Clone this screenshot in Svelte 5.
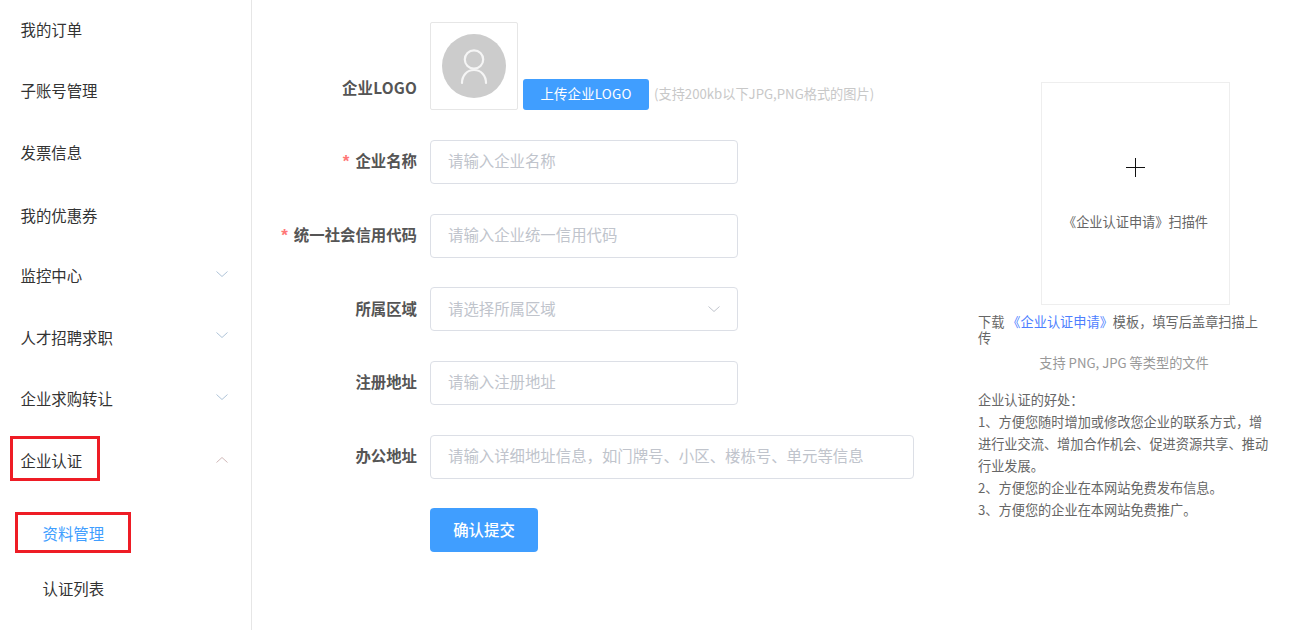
<script>
  const menu = [
    { label: '我的订单', h: 61, nudge: true },
    { label: '子账号管理', h: 62 },
    { label: '发票信息', h: 62 },
    { label: '我的优惠券', h: 62, nudge: true },
    { label: '监控中心', arrow: 'down', h: 61 },
    { label: '人才招聘求职', arrow: 'down', h: 62 },
    { label: '企业求购转让', arrow: 'down', h: 61 },
    { label: '企业认证', arrow: 'up', box: true, h: 62 }
  ];
  const fields = [
    { label: '企业名称', req: true, ph: '请输入企业名称' },
    { label: '统一社会信用代码', req: true, ph: '请输入企业统一信用代码' },
    { label: '所属区域', ph: '请选择所属区域', select: true },
    { label: '注册地址', ph: '请输入注册地址' },
    { label: '办公地址', ph: '请输入详细地址信息，如门牌号、小区、楼栋号、单元等信息', wide: true }
  ];
</script>

<div class="page">
  <aside class="side">
    {#each menu as m}
      <div class="item" class:nudge={m.nudge} style="height:{m.h}px">
        <span class="label">{m.label}</span>
        {#if m.box}<span class="redbox main"></span>{/if}
        {#if m.arrow}
          <svg class="arrow" class:up={m.arrow === 'up'} width="12" height="6" viewBox="0 0 12 6"><path d="M.5.5l5.500 5 5.500-5" fill="none" stroke="currentColor" stroke-width="1"/></svg>
        {/if}
      </div>
    {/each}
    <div class="sub active"><span>资料管理</span><span class="redbox second"></span></div>
    <div class="sub last"><span>认证列表</span></div>
  </aside>

  <main class="form">
    <div class="logo-row">
      <div class="label-col logo-label">企业LOGO</div>
      <div class="logo-box">
        <svg width="64" height="64" viewBox="0 0 64 64">
          <circle cx="32" cy="32" r="32" fill="#ccc"/>
          <circle cx="32" cy="25.500" r="9.200" fill="none" stroke="#f5f5f5" stroke-width="2.200"/>
          <path d="M20 49c0-7.500 5-13 12-13s12 5.500 12 13" fill="none" stroke="#f5f5f5" stroke-width="2.200" stroke-linecap="round"/>
        </svg>
      </div>
      <button class="upload">上传企业LOGO</button>
      <span class="hint">(支持200kb以下JPG,PNG格式的图片)</span>
    </div>

    {#each fields as f}
      <div class="row">
        <div class="label-col">{#if f.req}<i>*</i>{/if}{f.label}</div>
        <div class="input" class:wide={f.wide}>
          <span>{f.ph}</span>
          {#if f.select}
            <svg width="12" height="6" viewBox="0 0 12 6"><path d="M.5.5l5.500 5 5.500-5" fill="none" stroke="#c0c4cc" stroke-width="1"/></svg>
          {/if}
        </div>
      </div>
    {/each}

    <button class="submit">确认提交</button>
  </main>

  <section class="right">
    <div class="scan">
      <svg width="19" height="19" viewBox="0 0 19 19"><path d="M9.500 0v19M0 9.500h19" stroke="#111" stroke-width="1"/></svg>
      <p>《企业认证申请》扫描件</p>
    </div>
    <p class="dl">下载 <a href="#top">《企业认证申请》</a>模板，填写后盖章扫描上传</p>
    <p class="types">支持 PNG, JPG 等类型的文件</p>
    <div class="benefits">
      <p>企业认证的好处：</p>
      <p>1、方便您随时增加或修改您企业的联系方式，增进行业交流、增加合作机会、促进资源共享、推动行业发展。</p>
      <p>2、方便您的企业在本网站免费发布信息。</p>
      <p>3、方便您的企业在本网站免费推广。</p>
    </div>
  </section>
</div>

<style>
  :global(body) { margin: 0; background: #fff; }
  .page {
    display: flex;
    width: 1298px;
    height: 630px;
    overflow: hidden;
    font-family: "Noto Sans CJK SC", "Liberation Sans", sans-serif;
    color: #333;
  }
  .side {
    width: 251px;
    height: 630px;
    flex: none;
    border-right: 1px solid #e6e6e6;
  }
  .item {
    position: relative;
    box-sizing: border-box;
    display: flex;
    align-items: center;
    justify-content: space-between;
    padding: 0 23px 0 20.500px;
    font-size: 15.400px;
  }
  .item.nudge { padding-top: 2px; }
  .label { margin-top: -5px; }
  .arrow { color: #afc4d8; margin-top: -8px; }
  .arrow.up { transform: rotate(180deg); color: #d0b8b8; margin-top: -5px; }
  .redbox {
    position: absolute;
    border: 3px solid #ee1c25;
    box-sizing: border-box;
  }
  .redbox.main { left: 10px; top: 5px; width: 90px; height: 45px; }
  .sub {
    position: relative;
    height: 55px;
    padding-left: 42.500px;
    display: flex;
    align-items: center;
    font-size: 15.400px;
  }
  .sub.last { height: 53px; }
  .sub.active { color: #409eff; margin-top: 12px; height: 56px; }
  .redbox.second { left: 15px; top: 7px; width: 116px; height: 41px; }
  .form {
    width: 662px;
    flex: none;
    padding: 22px 0 0 16px;
    box-sizing: border-box;
  }
  .label-col {
    width: 149px;
    flex: none;
    text-align: right;
    font-size: 15.400px;
    font-weight: 700;
    color: #555;
    margin-right: 13px;
    padding-bottom: 3.500px;
  }
  .label-col i {
    color: #f77;
    font-style: normal;
    font-weight: 700;
    font-size: 17px;
    line-height: 0;
    font-family: "Liberation Sans", sans-serif;
    margin-right: 6px;
  }
  .logo-row { display: flex; align-items: flex-end; height: 88px; margin-bottom: 30px; }
  .logo-label { align-self: flex-start; margin-top: 54px; padding-bottom: 0; letter-spacing: .2px; }
  .logo-box {
    width: 88px;
    height: 88px;
    box-sizing: border-box;
    border: 1px solid #e6e6e6;
    border-radius: 2px;
    display: flex;
    align-items: center;
    justify-content: center;
    flex: none;
  }
  .upload {
    margin-left: 5px;
    width: 126px;
    height: 31px;
    border: 0;
    border-radius: 3px;
    background: #409eff;
    color: #fff;
    font: inherit;
    font-size: 13.400px;
    letter-spacing: .2px;
    padding: 0 0 3px;
  }
  .hint { margin-left: 5px; font-size: 13.200px; line-height: 29px; padding-bottom: 2px; color: #c8c8c8; white-space: nowrap; }
  .row { display: flex; align-items: center; height: 44px; margin-bottom: 29.720px; }
  .input {
    width: 308px;
    height: 44px;
    box-sizing: border-box;
    border: 1px solid #dcdfe6;
    border-radius: 4px;
    padding: 0 17px 3.500px;
    display: flex;
    align-items: center;
    justify-content: space-between;
    font-size: 15.400px;
    color: #c0c4cc;
    white-space: nowrap;
  }
  .input svg { margin-top: 3px; }
  .input.wide { width: 484px; }
  .submit {
    display: block;
    margin: -.400px 0 0 162px;
    width: 108px;
    height: 44px;
    border: 0;
    border-radius: 4px;
    background: #409eff;
    color: #fff;
    font: inherit;
    font-size: 15.400px;
    font-weight: 500;
    padding: 0 0 2px;
  }
  .right {
    width: 292px;
    margin-left: 64px;
    padding-top: 82px;
    font-size: 13.200px;
    color: #666;
  }
  .right p { margin: 0; }
  .scan {
    width: 189px;
    height: 223px;
    box-sizing: border-box;
    margin-left: 63px;
    border: 1px solid #eee;
    display: flex;
    flex-direction: column;
    align-items: center;
    padding-top: 75px;
  }
  .scan p { margin-top: 35px; white-space: nowrap; }
  .dl { margin-top: 9px !important; line-height: 16px; width: 288px; }
  .dl a { color: #4e7fff; text-decoration: none; }
  .types { text-align: center; color: #999; margin-top: 7px !important; line-height: 19px; }
  .benefits { margin-top: 17px; line-height: 22px; }
</style>
